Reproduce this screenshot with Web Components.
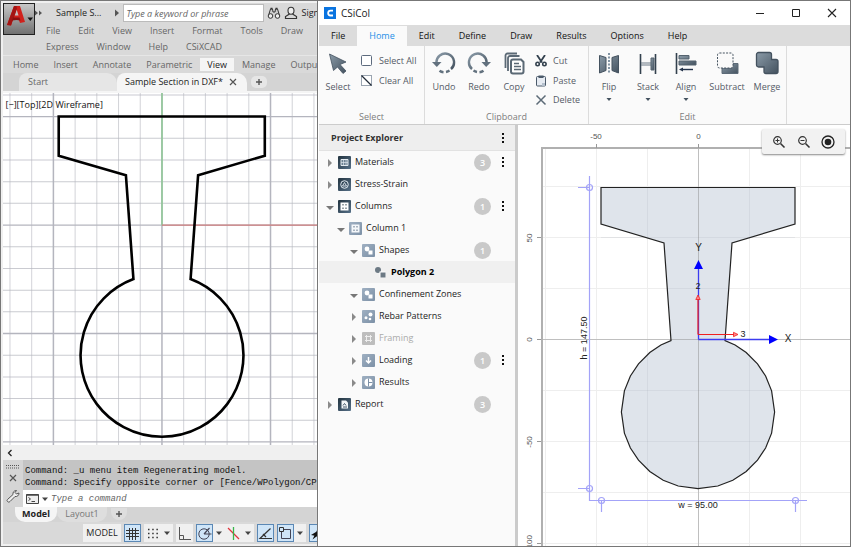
<!DOCTYPE html>
<html lang="en">
<head>
<meta charset="utf-8">
<title>CSiCol</title>
<style>
html,body{height:100%}
body{margin:0;font:9px/16px "Open Sans","Noto Sans",sans-serif;color:#222;background:#fff}
</style>
</head>
<body>
<desk-top></desk-top>
<script>
const RESET = `*{box-sizing:border-box}
button,input{font:inherit;color:inherit;background:none;border:0;padding:0;margin:0;border-radius:0}
button{display:flex;align-items:center;justify-content:center;white-space:nowrap}`;

const define = (name, css, html) => customElements.define(name, class extends HTMLElement {
  connectedCallback() {
    if (this.shadowRoot) return;
    const root = this.attachShadow({mode: 'open'});
    const t = document.createElement('template');
    t.innerHTML = `<style>${RESET}${css}</style>` + (typeof html === 'function' ? html(this) : html);
    root.append(t.content);
  }
});

/* ---------- icons: [viewBox size, markup] ---------- */
const G = '<defs><linearGradient id="g" x1="0" y1="0" x2="1" y2="1"><stop offset="0" stop-color="#8b9ba8"/><stop offset="1" stop-color="#44525f"/></linearGradient><linearGradient id="d" x1="0" y1="0" x2="1" y2="1"><stop offset="0" stop-color="#22333f"/><stop offset="1" stop-color="#567088"/></linearGradient><linearGradient id="l" x1="0" y1="0" x2="1" y2="1"><stop offset="0" stop-color="#9fb0c2"/><stop offset="1" stop-color="#7c90a6"/></linearGradient></defs>';
const tile = (fill, inner) => [13, `<rect width="13" height="13" rx="1" fill="url(#${fill})"/>${inner}`];
const ICONS = {
  csi: [12, '<path fill="#0a74e0" d="M0 0h12v12H0z"/><path d="M9 3.6H6.6a2.4 2.4 0 0 0 0 4.9H9" fill="none" stroke="#fff" stroke-width="1.8"/>'],
  min: [10, '<path d="M1 5.5h8" stroke="#222"/>'],
  max: [10, '<path d="M1.5 1.5h7v7h-7z" fill="none" stroke="#222"/>'],
  close: [10, '<path d="M1 1l8 8M9 1l-8 8" stroke="#222" stroke-width="1.1"/>'],
  cursor: [24, '<path d="M3.500 3l16.500 8-6 2.500 6 6.500-3 2.500-5.500-6.500-4 3.500z" fill="url(#g)" stroke="#44525f" stroke-width=".8"/>'],
  box: [12, '<rect x=".5" y=".5" width="10" height="10" rx="1" fill="#fff" stroke="#5d6b7e"/>'],
  boxclear: [12, '<rect x=".5" y=".5" width="10" height="10" fill="#fff" stroke="#9aa4b0"/><path d="M.5.5l10 10" stroke="#222c38" stroke-width="1.200"/>'],
  undo: [24, '<path d="M4.500 12.500A8.800 8.800 0 1 1 19 18" fill="none" stroke="url(#g)" stroke-width="2.400"/><path d="M0 11h9.500l-4.700 5z" fill="#62717e"/><path d="M17.500 19.500a9 9 0 0 1-3.500 1.500M11.500 21.200a8 8 0 0 1-4-1.500" fill="none" stroke="#62717e" stroke-width="2.400"/>'],
  redo: [24, '<path d="M19.500 12.500A8.800 8.800 0 1 0 5 18" fill="none" stroke="url(#g)" stroke-width="2.400"/><path d="M24 11h-9.500l4.700 5z" fill="#62717e"/><path d="M6.500 19.500a9 9 0 0 0 3.500 1.500M12.500 21.200a8 8 0 0 0 4-1.500" fill="none" stroke="#62717e" stroke-width="2.400"/>'],
  copy: [24, '<path d="M3.500 17V4.500a2 2 0 0 1 2-2H15M6 20V7a2 2 0 0 1 2-2h9.500" fill="none" stroke="#5b6975" stroke-width="1.800"/><path d="M11 8.500h8l2.500 2.500v9.500a2 2 0 0 1-2 2H11a2 2 0 0 1-2-2v-10a2 2 0 0 1 2-2z" fill="#fff" stroke="#5b6975" stroke-width="2"/><path d="M12 12.500h5M12 15.500h7M12 18.500h7" stroke="#5b6975" stroke-width="1.600"/>'],
  cut: [12, '<path d="M2 0l5 7.500M10 0L5 7.500" stroke="#33414e" stroke-width="1.800"/><circle cx="2.600" cy="9" r="1.700" fill="none" stroke="#33414e" stroke-width="1.600"/><circle cx="9.400" cy="9" r="1.700" fill="none" stroke="#33414e" stroke-width="1.600"/>'],
  paste: [12, '<rect x="1.500" y="1.500" width="9" height="9.500" rx="1" fill="#e6ebf2" stroke="#4b5a6a"/><path d="M3.500.5h5v2.500h-5z" fill="#4b5a6a"/><path d="M7 8h3v3H7z" fill="#b5c0cd"/>'],
  del: [12, '<path d="M1.500 1.500l9 9M10.500 1.500l-9 9" stroke="#5d6b77" stroke-width="1.500"/>'],
  flip: [24, '<path d="M2.500 4.500l6.500 2v13l-6.500 2.500zM21.500 4.500l-6.500 2v13l6.500 2.500z" fill="url(#g)" stroke="#44525f"/><path d="M12 2v21" stroke="#33506a" stroke-width="1.200" stroke-dasharray="2 1.500"/>'],
  stack: [24, '<path d="M4.500 3v20M19.500 3v20" stroke="#33414e" stroke-width="1.600"/><path d="M5 12h10M5 14h10" stroke="#6a7885"/><path d="M15 7h3v12h-3z" fill="url(#g)" stroke="#55636f"/>'],
  align: [24, '<path d="M2.500 2v21" stroke="#33414e" stroke-width="1.600"/><path d="M5 4.500h10v3.500H5zM5 10h17v4H5z" fill="url(#g)" stroke="#55636f"/><path d="M8 18.500h11" stroke="#22324a" stroke-width="1.400"/><path d="M5 18.500l4-2v4z" fill="#22324a"/>'],
  subtract: [24, '<path d="M7 22.500V17h10V12.500h6v10z" fill="url(#g)" stroke="#5c6a77"/><rect x="2.500" y="2" width="15.500" height="15" rx="2" fill="#fafafa" stroke="#44525f" stroke-dasharray="2 1.300"/>'],
  merge: [24, '<path d="M3.500 1.500h11a2 2 0 0 1 2 2v5h4.500a2 2 0 0 1 2 2v10a2 2 0 0 1-2 2H11a2 2 0 0 1-2-2V16H3.500a2 2 0 0 1-2-2V3.500a2 2 0 0 1 2-2z" fill="url(#g)" stroke="#44525f" stroke-width="1.300"/>'],
  materials: tile('d', '<path d="M3 3.500h7v6H3z" fill="#6d8293" stroke="#e3eaf0"/><path d="M5.500 4v5M8 4v5M3 6.500h7" stroke="#dbe4ec" stroke-width=".7"/>'),
  strain: tile('d', '<circle cx="6.500" cy="6.500" r="3.800" fill="none" stroke="#dfe7ee"/><path d="M6.500 4.500l2 3.500h-4z" fill="none" stroke="#dfe7ee" stroke-width=".9"/>'),
  columns: tile('d', '<path d="M2.500 2.500h8v8h-8z" fill="#fff"/><path d="M4.500 4h1v1.500h-1zM7.500 4h1v1.500h-1zM4.500 7.500h1V9h-1zM7.500 7.500h1V9h-1z" fill="#33444f"/>'),
  column: tile('l', '<path d="M2.500 2.500h8v8h-8z" fill="#f4f7fa"/><path d="M4.500 4h1v1.500h-1zM7.500 4h1v1.500h-1zM4.500 7.500h1V9h-1zM7.500 7.500h1V9h-1z" fill="#5c7085"/>'),
  shapes: tile('l', '<circle cx="5" cy="5" r="2.400" fill="#fff"/><path d="M6.500 6.500h4v4h-4z" fill="#fff"/>'),
  polygon: [13, '<circle cx="4" cy="4" r="3" fill="#6c7984"/><path d="M5.500 5.500h6v6h-6z" fill="#fff"/><path d="M6.500 6.500h5v5h-5z" fill="#6c7984"/>'],
  rebar: tile('l', '<circle cx="4" cy="7.800" r="1.500" fill="#fff"/><circle cx="8.500" cy="4.500" r="2" fill="#fff"/><circle cx="8" cy="9" r="1.300" fill="#fff"/>'),
  framing: [13, '<rect width="13" height="13" rx="1" fill="#bdbdbd"/><path d="M4.500 3v7M8.500 3v7M3 4.500h7M3 8.500h7" stroke="#eee"/>'],
  loading: tile('l', '<path d="M6.500 3v6M4 6.500L6.500 9 9 6.500" fill="none" stroke="#fff" stroke-width="1.500"/>'),
  results: tile('l', '<circle cx="6.500" cy="6.500" r="4" fill="#fff"/><path d="M6.500 2.500v8M6.500 6.500h4" stroke="#7c90a6"/>'),
  report: tile('d', '<path d="M3.500 2.500h4.500l2 2v6H3.500z" fill="#f3f6f8"/><path d="M5 9h4M5 7.500l1.500-2 1.500 2" stroke="#44586a" fill="none"/>'),
  closed: [8, '<path d="M2 0l4 4-4 4z" fill="#8a8a8a"/>'],
  open: [8, '<path d="M0 3h8L4 7z" fill="#777"/>'],
  down: [8, '<path d="M1.500 3h5L4 6z" fill="#44525f"/>'],
  kebab: [12, '<path d="M5 1h2v2H5zM5 5h2v2H5zM5 9h2v2H5z" fill="#111"/>'],
  zin: [14, '<circle cx="5.500" cy="5.500" r="3.800" fill="none" stroke="#333" stroke-width="1.200"/><path d="M8.500 8.500l4 4" stroke="#333" stroke-width="1.600"/><path d="M3.500 5.500h4M5.500 3.500v4" stroke="#333"/>'],
  zout: [14, '<circle cx="5.500" cy="5.500" r="3.800" fill="none" stroke="#333" stroke-width="1.200"/><path d="M8.500 8.500l4 4" stroke="#333" stroke-width="1.600"/><path d="M3.500 5.500h4" stroke="#333"/>'],
  fit: [14, '<circle cx="7" cy="7" r="6" fill="none" stroke="#222" stroke-width="1.300"/><circle cx="7" cy="7" r="3.300" fill="#222"/>'],
  acad: [32, '<defs><linearGradient id="b" x1="0" y1="0" x2="0" y2="1"><stop offset="0" stop-color="#c9c9c9"/><stop offset="1" stop-color="#6f6f6f"/></linearGradient></defs><rect x=".5" y=".5" width="31" height="31" fill="url(#b)" stroke="#222"/><path d="M4 22L11 3h6l5 16-5 1-1.500-4H10l-2 6.500z" fill="#d0211c"/><path d="M11.500 12.500L13.500 6l2 6.500z" fill="#c4c0c0"/><path d="M11 3l-7 19 4 .5L14 6l-.5-3z" fill="#a31513"/><path d="M10 14.500h6.500l1 3-4-.5-4.500.5z" fill="#8c1010"/><path d="M24.500 14.500h5.500l-2.700 3.500z" fill="#111"/>'],
  ffwd: [8, '<path d="M0 1.500L3 4 0 6.500zM4 1.500L7 4 4 6.500z" fill="#555"/>'],
  play: [8, '<path d="M2 .5L6 4 2 7.500z" fill="#555"/>'],
  binoc: [14, '<path d="M1.500 9.500L3.500 3h2l.5 3h2l.5-3h2l2 6.500" fill="#cfcfcf" stroke="#333"/><circle cx="3.500" cy="10" r="2.300" fill="#eee" stroke="#333"/><circle cx="10.500" cy="10" r="2.300" fill="#eee" stroke="#333"/><path d="M3.500 2.500h2M8.500 2.500h2" stroke="#333" stroke-width="1.600"/>'],
  user: [14, '<path d="M7 1.200c2 0 3 1.300 3 3.300S8.800 8.300 7 8.300 4 6.500 4 4.500s1-3.300 3-3.300z" fill="#eee" stroke="#333" stroke-width="1.100"/><path d="M5.500 8L1.500 10.500v2h11v-2L8.500 8" fill="none" stroke="#333" stroke-width="1.200"/>'],
  x: [8, '<path d="M1 1l6 6M7 1L1 7" stroke="#555" stroke-width="1.200"/>'],
  plus: [8, '<path d="M1 4h6M4 1v6" stroke="#555" stroke-width="1.400"/>'],
  left: [10, '<path d="M6.500 2L3.500 5l3 3" fill="none" stroke="#222" stroke-width="1.300"/>'],
  grip: [14, '<path d="M0 5.500h14M0 8h14" stroke="#555" stroke-dasharray="1 1"/>'],
  wrench: [14, '<path d="M1.500 12.500c-.8-.8-.5-1.500 0-2L7 5.500c-.4-2 .8-4 3.500-4L9 3.500 10.500 5l2.500-1c0 2.500-2 4-4 3.500L4 12.500c-.8.7-1.700.8-2.500 0z" fill="#eee" stroke="#555"/>'],
  prompt: [14, '<path d="M.5 2.500h12v9H.5z" fill="#eee" stroke="#444"/><path d="M.5 3h12" stroke="#444" stroke-width="1.500"/><path d="M2.500 5.500l2 1.500-2 1.500M5.500 9.500h3.500" fill="none" stroke="#444"/>'],
  sgrid: [15, '<path d="M4.500 2v12M7.500 2v12M10.500 2v12M1 4.500h13M1 7.500h13M1 10.500h13" stroke="#333" stroke-width="1"/>'],
  sdots: [15, '<path d="M3 3.500h10M3 7.500h10M3 11.500h10" stroke="#333" stroke-width="1.500" stroke-dasharray="1.500 2.700"/>'],
  ortho: [15, '<path d="M2.500 1v12.500H14M2.500 9.500h4v4" fill="none" stroke="#555"/>'],
  polar: [15, '<circle cx="7" cy="8" r="5.200" fill="none" stroke="#445"/><path d="M7 8h7.500M7 8l5.500-6" stroke="#445" stroke-width="1.200"/>'],
  iso: [15, '<path d="M2 2l11 11" stroke="#e0343c" stroke-width="1.300"/><path d="M7.500 1v13" stroke="#38b54a" stroke-width="1.300"/>'],
  track: [15, '<path d="M12.500 2.500L2 12.500h12" fill="none" stroke="#333" stroke-width="1.200"/><path d="M5 8l3 3" stroke="#333" stroke-width="1.200"/>'],
  osnap: [15, '<path d="M3.500 3.500h9v9h-9z" fill="none" stroke="#445"/><path d="M1.500 1.500h4v4h-4z" fill="#cfe5f8" stroke="#333"/>'],
  anno: [15, '<path d="M8.500 1L2.500 13.500l4-3h3l4 3z" fill="#111"/><path d="M1 9l5-3v4z" fill="#111"/>'],
  sdown: [8, '<path d="M1 2.500h6L4 6z" fill="#444"/>']
};
customElements.define('ui-icon', class extends HTMLElement {
  connectedCallback() {
    if (this.shadowRoot) return;
    const [s, m] = ICONS[this.getAttribute('name')];
    this.attachShadow({mode: 'open'}).innerHTML =
      `<style>:host{display:inline-flex;flex:none}svg{display:block}</style><svg width="${s}" height="${s}" viewBox="0 0 ${s} ${s}" aria-hidden="true">${G}${m}</svg>`;
  }
});

/* ---------- shared parts ---------- */
define('menu-item', `:host{display:flex;flex:none}
button{padding:0 var(--pad,9px);height:100%;color:var(--ink,#666)}
:host([active]) button{background:var(--on,#f5f5f5);color:var(--on-ink,#222)}`,
  '<button type="button"><slot></slot></button>');

define('tool-button', `:host{display:block;flex:none;width:38px}
button{width:100%;flex-direction:column;justify-content:flex-start;color:#555b66}
span{line-height:16px;margin-top:4px}`,
  e => `<button type="button"><ui-icon name="${e.getAttribute('icon')}"></ui-icon><span><slot></slot></span>${e.hasAttribute('drop') ? '<ui-icon name="down"></ui-icon>' : ''}</button>`);

define('small-tool', `:host{display:block;height:20px}
button{height:100%;gap:6px;color:#555b66}`,
  e => `<button type="button"><ui-icon name="${e.getAttribute('icon')}"></ui-icon><slot></slot></button>`);

define('tool-group', `:host{display:flex;flex-direction:column;flex:none;border-right:1px solid #dcdcdc}
.row{display:flex;height:64px;padding:5px 0 0}
.cap{text-align:center;color:#7d7d7d;line-height:14px}`,
  e => `<div class="row"><slot></slot></div><div class="cap">${e.getAttribute('label')}</div>`);

define('tree-row', `:host{display:flex;align-items:center;height:22px;color:#222}
:host([selected]){background:#f0f0f0;font-weight:700;color:#000}
:host([off]){color:#aaa}
.in{display:flex;align-items:center;flex:1;gap:4px}
.tw{width:8px;height:8px;margin-top:2px}
.tag{width:17px;height:17px;border-radius:50%;background:#c9c9c9;color:#fff;font-weight:600;text-align:center;line-height:17px}
.more{width:12px;height:12px;margin:0 6px}`,
  e => {
    const n = e.getAttribute('count'), tw = e.getAttribute('twist');
    const pad = [7, 18, 31, 43][e.getAttribute('level') || 0];
    return `<div class="in" style="padding-left:${pad}px">${tw ? `<button class="tw" type="button" aria-label="Toggle"><ui-icon name="${tw}"></ui-icon></button>` : '<span class="tw"></span>'}
    <ui-icon name="${e.getAttribute('icon')}"></ui-icon><slot></slot></div>
    ${n ? `<span class="tag">${n}</span>` : ''}${e.hasAttribute('more') ? '<button class="more" type="button" aria-label="More"><ui-icon name="kebab"></ui-icon></button>' : '<span class="more"></span>'}`;
  });

/* ---------- CAD window ---------- */
define('cad-drawing', `:host{display:block;background:#fff;overflow:hidden;position:relative}
svg{display:block;width:100%;height:100%}
text{font-size:9px;fill:#111}`,
  () => {
    let g = '';
    for (let i = 0; i < 24; i++) { const x = 10.4 + 21.65 * i; g += `<path d="M${x} 93V600" stroke="#b4b5be" stroke-opacity="${i % 5 === 2 ? 1 : .6}" stroke-width="${i % 5 === 2 ? 1.5 : 1}"/>`; }
    for (let j = 0; j < 22; j++) { const y = 94.9 + 21.63 * j; g += `<path d="M3 ${y}H600" stroke="#b4b5be" stroke-opacity="${j % 5 === 1 ? 1 : .7}" stroke-width="${j % 5 === 1 ? 1.3 : 1}"/>`; }
    return `<svg viewBox="3 93 314 351" preserveAspectRatio="xMidYMin slice" role="img" aria-label="Section drawing">${g}
    <path d="M162 93V225" stroke="#8ccb92" stroke-width="1.400"/><path d="M162 224.700H600" stroke="#cf7f7f" stroke-width="1.300"/>
    <path d="M59 116.500H264.500V155.500L198 175 190.500 278.500A81.200 81.200 0 1 1 133.500 278.500L126 175 59 155.500Z" fill="none" stroke="#000" stroke-width="2.600"/>
    <text x="6" y="108">[−][Top][2D Wireframe]</text></svg>`;
  });

define('status-cell', `:host{display:flex;flex:none}
button{height:18px;width:17px;background:#f0f0f0;border:1px solid #f0f0f0;color:#222}
:host([text]) button{width:38px}
:host([arrow]) button{width:12px}
:host([on]) button{background:#cfe5f8;border-color:#5b88b5}`,
  e => `<button type="button">${e.hasAttribute('icon') ? `<ui-icon name="${e.getAttribute('icon')}"></ui-icon>` : ''}<slot></slot></button>`);

define('cad-window', `:host{display:flex;flex-direction:column;min-width:0;overflow:hidden;border:1px solid #777;background:#f0f0f0;padding:2px 0 2px 2px}
.head{display:flex;background:#d9d9d9;height:52px;flex:none}
.logo{flex:none;align-self:flex-start}
.rows{flex:1;min-width:0}
.title{display:flex;align-items:center;height:20px;white-space:nowrap}
.title b{font-weight:400;margin:0 12px 0 13px}
.title input{width:141px;height:18px;flex:none;background:#fff;border:1px solid #bbb;padding:0 2px;font-style:italic;margin-left:2px}
input::placeholder{color:#666;opacity:1}
.icons{display:flex;gap:3px;align-items:center;margin-left:3px}
.menu{display:flex;height:16px;padding-left:2px}
.ribbon{display:flex;height:18px;flex:none;background:#d9d9d9;border-top:1px solid #e6e6e6;padding:2px 0 2px 3px;gap:1px;--pad:7px}
.tabs{display:flex;height:18px;flex:none;background:#d4d4d4;padding-left:16px}
.tab{border-radius:8px 10px 0 0;background:#e6e6e6;color:#666;justify-content:flex-start;padding:0 9px;width:98px}
.tab.on{background:#f5f5f5;color:#222;width:130px;padding:0 10px 0 8px;justify-content:space-between}
.add{width:16px;height:12px;border-radius:5px;background:#e6e6e6;margin:3px 0 0 4px}
.line{height:2px;flex:none;background:#f5f5f5}
cad-drawing{flex:1;min-height:0}
.scroll{height:15px;flex:none;background:#f0f0f0;display:flex;align-items:center;padding-left:2px}
.cmd{display:flex;flex:none;height:47px}
.side{width:20px;background:#d5d5d5;display:flex;flex-direction:column;align-items:center;padding-bottom:4px}
.side ui-icon:last-child{margin-top:auto}
.con{flex:1;min-width:0;font:9px/12px "Liberation Mono",monospace;display:flex;flex-direction:column}
.hist{background:#c4c4c4;height:30px;padding:5px 2px 0;white-space:nowrap;overflow:hidden;color:#111}
.ask{flex:1;background:#fff;display:flex;align-items:center;padding-left:3px;gap:1px}
.ask input{flex:1;min-width:0;font-style:italic;padding-left:1px}
.lay{display:flex;flex:none;height:15px;background:#d4d4d4;padding-left:12px}
.lay button{width:42px;border-radius:0 0 10px 10px;background:#f5f5f5;font-weight:700;padding-bottom:2px}
.lay button+button{background:#dedede;font-weight:400;color:#777;width:50px}
.lay button+.add{width:16px;margin:1px 0 2px 4px;padding:0}
.stat{display:flex;flex:none;height:22px;background:#d9d9d9;padding:0 0 0 80px;gap:3px;align-items:center}
.set{display:flex;background:#f0f0f0}`,
  `<div class="head"><ui-icon class="logo" name="acad"></ui-icon><div class="rows">
    <div class="title"><ui-icon name="ffwd"></ui-icon><b>Sample S...</b><ui-icon name="play"></ui-icon><input placeholder="Type a keyword or phrase" aria-label="Search"><span class="icons"><ui-icon name="binoc"></ui-icon><ui-icon name="user"></ui-icon><span>Sign</span></span></div>
    <div class="menu"><menu-item>File</menu-item><menu-item>Edit</menu-item><menu-item>View</menu-item><menu-item>Insert</menu-item><menu-item>Format</menu-item><menu-item>Tools</menu-item><menu-item>Draw</menu-item></div>
    <div class="menu"><menu-item>Express</menu-item><menu-item>Window</menu-item><menu-item>Help</menu-item><menu-item>CSiXCAD</menu-item></div></div></div>
  <div class="ribbon"><menu-item>Home</menu-item><menu-item>Insert</menu-item><menu-item>Annotate</menu-item><menu-item>Parametric</menu-item><menu-item active>View</menu-item><menu-item>Manage</menu-item><menu-item>Outpu</menu-item></div>
  <div class="tabs"><button class="tab" type="button">Start</button><button class="tab on" type="button">Sample Section in DXF*<ui-icon name="x"></ui-icon></button><button class="add" type="button" aria-label="New tab"><ui-icon name="plus"></ui-icon></button></div>
  <div class="line"></div>
  <cad-drawing></cad-drawing>
  <div class="scroll"><button type="button" aria-label="Scroll left"><ui-icon name="left"></ui-icon></button></div>
  <div class="cmd"><div class="side"><ui-icon name="grip"></ui-icon><ui-icon name="x"></ui-icon><ui-icon name="wrench"></ui-icon></div>
    <div class="con"><div class="hist"><div>Command: _u menu item Regenerating model.</div><div>Command: Specify opposite corner or [Fence/WPolygon/CP</div></div>
    <div class="ask"><ui-icon name="prompt"></ui-icon><ui-icon name="sdown"></ui-icon><input placeholder="Type a command" aria-label="Command"></div></div></div>
  <div class="lay"><button type="button">Model</button><button type="button">Layout1</button><button class="add" type="button" aria-label="New layout"><ui-icon name="plus"></ui-icon></button></div>
  <div class="stat"><status-cell text>MODEL</status-cell>
    <status-cell icon="sgrid" on></status-cell><div class="set"><status-cell icon="sdots"></status-cell><status-cell icon="sdown" arrow></status-cell></div>
    <status-cell icon="ortho"></status-cell><div class="set"><status-cell icon="polar" on></status-cell><status-cell icon="sdown" arrow></status-cell><status-cell icon="iso"></status-cell><status-cell icon="sdown" arrow></status-cell></div>
    <status-cell icon="track" on></status-cell><div class="set"><status-cell icon="osnap" on></status-cell><status-cell icon="sdown" arrow></status-cell></div><status-cell icon="anno" on></status-cell></div>`);

/* ---------- CSiCol window ---------- */
define('section-view', `:host{display:block;background:#fff;position:relative;overflow:hidden;min-width:0}
svg{display:block;width:100%;height:100%}
text{font:9px "Liberation Sans",sans-serif;fill:#222;text-anchor:middle}
.ax{font-size:8px;fill:#555}
.xy{font-size:10px}
.zoom{position:absolute;top:4px;right:5px;width:83px;height:25px;display:flex;align-items:center;justify-content:space-evenly;background:#f2f2f2;border-radius:2px;box-shadow:0 1px 2px #888}`,
  () => {
    let g = '';
    for (let i = 0; i < 12; i++) g += `<path d="M${545.5 + 51 * i} 149V700" stroke="#eeeeee"/>`;
    for (let j = 0; j < 10; j++) g += `<path d="M542 ${186.500 + 51 * j}H1000" stroke="#eeeeee"/>`;
    const pt = a => { const r = a * Math.PI / 180; return [76.6 * Math.cos(r), 76.6 * Math.sin(r)]; };
    const right = [-61, -51, -39, -28, -16, 0, 16, 28, 39, 51, 63, 75].map(pt);
    const arc = [...right.map(([x, y]) => [698 + x, 412 + y]), [698, 488.6], ...right.reverse().map(([x, y]) => [698 - x, 412 + y])].map(p => p.map(v => v.toFixed(1)).join(' ')).join('L');
    return `<svg viewBox="518 125 332 421" preserveAspectRatio="xMidYMin slice" role="img" aria-label="Column section">${g}
    <path d="M601 187.500H795V224L732 243 725 340.500L${arc}L671 340.500 664 243 601 224Z" fill="#dfe4eb"/>
    <g stroke="#8a93a0" stroke-opacity=".13"><path d="M647.500 188V237M749.500 188V237M601 237.500H795M667 288.500H728M625 390.500H771M628 441.500H768M647.500 355V470M749.500 355V470"/></g>
    <path d="M698.500 149V700M542 339.500H1000" stroke="#777" stroke-opacity=".4"/>
    <path d="M601 187.500H795V224L732 243 725 340.500L${arc}L671 340.500 664 243 601 224Z" fill="none" stroke="#222" stroke-width="1.200"/>
    <path d="M542 700V148H1000" fill="none" stroke="#b0b0b0" stroke-width="2"/>
    <path d="M596.500 144v4M698.500 144v4M537 237.500h4M537 339.500h4M537 441.500h4M537 543.500h4" stroke="#999"/>
    <text class="ax" x="596" y="139">-50</text><text class="ax" x="698.500" y="139">0</text>
    <text class="ax" transform="translate(532 238)rotate(-90)">50</text><text class="ax" transform="translate(532 339.500)rotate(-90)">0</text><text class="ax" transform="translate(532 442)rotate(-90)">-50</text><text class="ax" transform="translate(532 543)rotate(-90)">-100</text>
    <g fill="none" stroke="#a3a3f8" stroke-width="1.200"><path d="M589.500 176V500.500H807M578 187.500h12M578 488.500h12M601.500 500v12M795.500 500v12"/><circle cx="589.500" cy="187.500" r="3"/><circle cx="589.500" cy="488.500" r="3"/><circle cx="601.500" cy="500.500" r="3"/><circle cx="795.500" cy="500.500" r="3"/></g>
    <text transform="translate(586.500 338)rotate(-90)">h = 147.50</text><text x="698" y="508">w = 95.00</text>
    <path d="M698.500 339.500V268M698.500 339.500H770" stroke="#3c3cf0" stroke-width="1.300"/><path d="M698.500 260l4.500 9h-9zM778 339.500l-9-4.500v9z" fill="#00f"/>
    <path d="M698 334.500V298M698 334.500H734" stroke="#f02020" stroke-width="1.200"/><path d="M698 295l2.200 4.500h-4.400zM738 334.500l-4.500-2.200v4.400z" fill="#f88" stroke="#f02020" stroke-width=".8"/>
    <text class="xy" x="698.500" y="251">Y</text><text class="xy" x="788" y="342">X</text><text x="698" y="289">2</text><text x="743" y="337">3</text></svg>
    <div class="zoom"><button type="button" aria-label="Zoom in"><ui-icon name="zin"></ui-icon></button><button type="button" aria-label="Zoom out"><ui-icon name="zout"></ui-icon></button><button type="button" aria-label="Zoom to fit"><ui-icon name="fit"></ui-icon></button></div>`;
  });

define('project-explorer', `:host{display:block;background:#fafafa;border-right:3px solid #cbcbcb;overflow:hidden}
header{display:flex;align-items:center;justify-content:space-between;height:26px;background:#eee;border-bottom:1px solid #e2e2e2;padding:0 6px 0 12px;font-weight:700;color:#333}`,
  `<header>Project Explorer<button type="button" aria-label="More"><ui-icon name="kebab"></ui-icon></button></header>
  <tree-row twist="closed" icon="materials" count="3" more>Materials</tree-row>
  <tree-row twist="closed" icon="strain">Stress-Strain</tree-row>
  <tree-row twist="open" icon="columns" count="1" more>Columns</tree-row>
  <tree-row level="1" twist="open" icon="column">Column 1</tree-row>
  <tree-row level="2" twist="open" icon="shapes" count="1">Shapes</tree-row>
  <tree-row level="3" icon="polygon" selected>Polygon 2</tree-row>
  <tree-row level="2" twist="open" icon="shapes">Confinement Zones</tree-row>
  <tree-row level="2" twist="closed" icon="rebar">Rebar Patterns</tree-row>
  <tree-row level="2" twist="closed" icon="framing" off>Framing</tree-row>
  <tree-row level="2" twist="closed" icon="loading" count="1" more>Loading</tree-row>
  <tree-row level="2" twist="closed" icon="results">Results</tree-row>
  <tree-row twist="closed" icon="report" count="3">Report</tree-row>`);

define('column-window', `:host{display:flex;flex-direction:column;min-width:0;overflow:hidden;border:solid #777;border-width:1px 1px 1px 0;background:#fff;padding-left:1px}
.title{display:flex;align-items:center;height:24px;flex:none;padding:0 13px 0 5px;gap:5px}
.title h1{font:inherit;font-size:10px;margin:0;flex:1;color:#222}
.title div{display:flex;gap:26px}
.menu{display:flex;height:21px;flex:none;background:#dcdcdc;padding-top:1px;--pad:12px;--ink:#111;--on:#fafafa;--on-ink:#1e8fe8}
.tools{display:flex;height:79px;flex:none;background:#fafafa;border-bottom:1px solid #ccc;overflow:hidden}
.stack{display:flex;flex-direction:column}
.work{display:grid;grid-template-columns:199px minmax(0,1fr);flex:1;min-height:0}`,
  `<div class="title"><ui-icon name="csi"></ui-icon><h1>CSiCol</h1><div><button type="button" aria-label="Minimize"><ui-icon name="min"></ui-icon></button><button type="button" aria-label="Maximize"><ui-icon name="max"></ui-icon></button><button type="button" aria-label="Close"><ui-icon name="close"></ui-icon></button></div></div>
  <div class="menu"><menu-item>File</menu-item><menu-item active>Home</menu-item><menu-item>Edit</menu-item><menu-item>Define</menu-item><menu-item>Draw</menu-item><menu-item>Results</menu-item><menu-item>Options</menu-item><menu-item>Help</menu-item></div>
  <div class="tools">
    <tool-group label="Select" style="width:106px"><tool-button icon="cursor">Select</tool-button><div class="stack" style="margin-left:4px"><small-tool icon="box">Select All</small-tool><small-tool icon="boxclear">Clear All</small-tool></div></tool-group>
    <tool-group label="Clipboard" style="width:164px"><tool-button icon="undo">Undo</tool-button><tool-button icon="redo" style="width:32px">Redo</tool-button><tool-button icon="copy">Copy</tool-button><div class="stack" style="margin-left:2px"><small-tool icon="cut">Cut</small-tool><small-tool icon="paste">Paste</small-tool><small-tool icon="del">Delete</small-tool></div></tool-group>
    <tool-group label="Edit" style="width:198px"><tool-button icon="flip" drop style="width:40px">Flip</tool-button><tool-button icon="stack" drop>Stack</tool-button><tool-button icon="align" drop>Align</tool-button><tool-button icon="subtract" style="width:44px">Subtract</tool-button><tool-button icon="merge" style="width:36px">Merge</tool-button></tool-group>
  </div>
  <div class="work"><project-explorer></project-explorer><section-view></section-view></div>`);

define('desk-top', `:host{display:grid;grid-template-columns:318fr 533fr;grid-template-rows:minmax(0,1fr);height:100vh}`,
  '<cad-window></cad-window><column-window></column-window>');
</script>
</body>
</html>
